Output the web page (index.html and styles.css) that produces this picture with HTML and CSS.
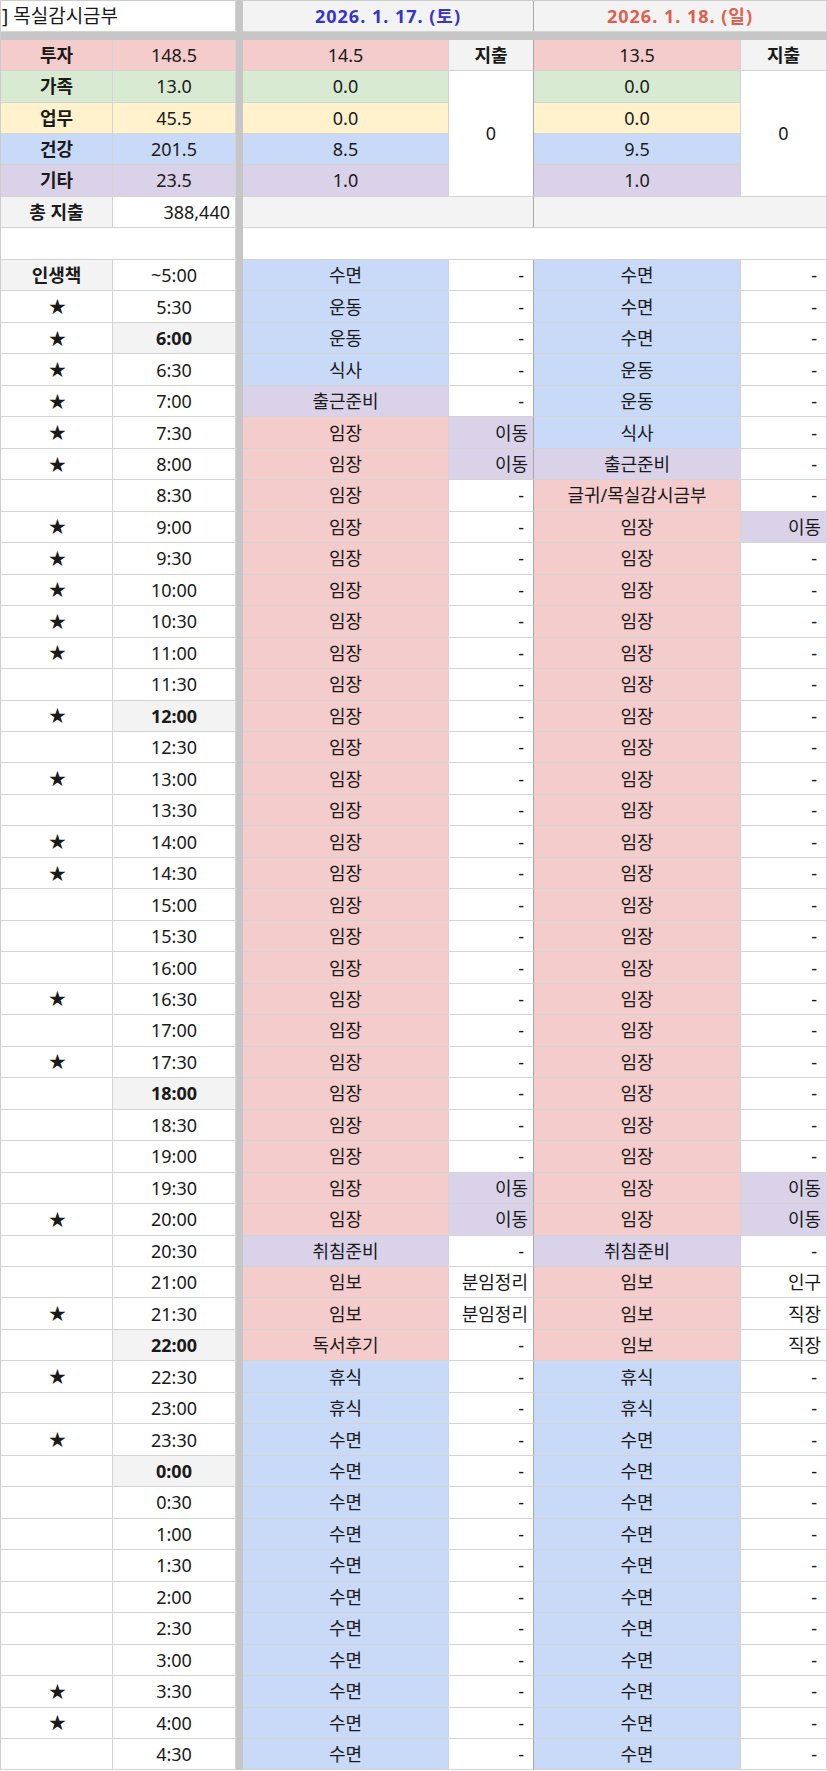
FILE: index.html
```html
<!DOCTYPE html>
<html lang="ko">
<head>
<meta charset="utf-8">
<title>목실감시금부</title>
<link rel="stylesheet" href="styles.css">
</head>
<body>
<div class="sheet">
  <div class="vsep"></div>
  <div class="hsep"></div>

  <div class="title">] 목실감시금부</div>
  <div class="date sat s">2026. 1. 17. (토)</div>
  <div class="date sun">2026. 1. 18. (일)</div>

  <div class="r k">투자</div><div class="r">148.5</div><div class="r">14.5</div><div class="h k s">지출</div><div class="r">13.5</div><div class="h k">지출</div>
  <div class="g k">가족</div><div class="g">13.0</div><div class="g">0.0</div><div class="tall s">0</div><div class="g">0.0</div><div class="tall">0</div>
  <div class="y k">업무</div><div class="y">45.5</div><div class="y">0.0</div><div class="y">0.0</div>
  <div class="b k">건강</div><div class="b">201.5</div><div class="b">8.5</div><div class="b">9.5</div>
  <div class="p k">기타</div><div class="p">23.5</div><div class="p">1.0</div><div class="p">1.0</div>
  <div class="h k">총 지출</div><div class="n">388,440</div><div class="h span2 s"></div><div class="h span2"></div>
  <div class="span2"></div><div class="span4"></div>

  <div class="h k">인생책</div><div>~5:00</div><div class="b">수면</div><div class="n d s">-</div><div class="b">수면</div><div class="n d">-</div>
  <div class="st">★</div><div>5:30</div><div class="b">운동</div><div class="n d s">-</div><div class="b">수면</div><div class="n d">-</div>
  <div class="st">★</div><div class="h k">6:00</div><div class="b">운동</div><div class="n d s">-</div><div class="b">수면</div><div class="n d">-</div>
  <div class="st">★</div><div>6:30</div><div class="b">식사</div><div class="n d s">-</div><div class="b">운동</div><div class="n d">-</div>
  <div class="st">★</div><div>7:00</div><div class="p">출근준비</div><div class="n d s">-</div><div class="b">운동</div><div class="n d">-</div>
  <div class="st">★</div><div>7:30</div><div class="r">임장</div><div class="n p s">이동</div><div class="b">식사</div><div class="n d">-</div>
  <div class="st">★</div><div>8:00</div><div class="r">임장</div><div class="n p s">이동</div><div class="p">출근준비</div><div class="n d">-</div>
  <div class="st"></div><div>8:30</div><div class="r">임장</div><div class="n d s">-</div><div class="r">글귀/목실감시금부</div><div class="n d">-</div>
  <div class="st">★</div><div>9:00</div><div class="r">임장</div><div class="n d s">-</div><div class="r">임장</div><div class="n p">이동</div>
  <div class="st">★</div><div>9:30</div><div class="r">임장</div><div class="n d s">-</div><div class="r">임장</div><div class="n d">-</div>
  <div class="st">★</div><div>10:00</div><div class="r">임장</div><div class="n d s">-</div><div class="r">임장</div><div class="n d">-</div>
  <div class="st">★</div><div>10:30</div><div class="r">임장</div><div class="n d s">-</div><div class="r">임장</div><div class="n d">-</div>
  <div class="st">★</div><div>11:00</div><div class="r">임장</div><div class="n d s">-</div><div class="r">임장</div><div class="n d">-</div>
  <div class="st"></div><div>11:30</div><div class="r">임장</div><div class="n d s">-</div><div class="r">임장</div><div class="n d">-</div>
  <div class="st">★</div><div class="h k">12:00</div><div class="r">임장</div><div class="n d s">-</div><div class="r">임장</div><div class="n d">-</div>
  <div class="st"></div><div>12:30</div><div class="r">임장</div><div class="n d s">-</div><div class="r">임장</div><div class="n d">-</div>
  <div class="st">★</div><div>13:00</div><div class="r">임장</div><div class="n d s">-</div><div class="r">임장</div><div class="n d">-</div>
  <div class="st"></div><div>13:30</div><div class="r">임장</div><div class="n d s">-</div><div class="r">임장</div><div class="n d">-</div>
  <div class="st">★</div><div>14:00</div><div class="r">임장</div><div class="n d s">-</div><div class="r">임장</div><div class="n d">-</div>
  <div class="st">★</div><div>14:30</div><div class="r">임장</div><div class="n d s">-</div><div class="r">임장</div><div class="n d">-</div>
  <div class="st"></div><div>15:00</div><div class="r">임장</div><div class="n d s">-</div><div class="r">임장</div><div class="n d">-</div>
  <div class="st"></div><div>15:30</div><div class="r">임장</div><div class="n d s">-</div><div class="r">임장</div><div class="n d">-</div>
  <div class="st"></div><div>16:00</div><div class="r">임장</div><div class="n d s">-</div><div class="r">임장</div><div class="n d">-</div>
  <div class="st">★</div><div>16:30</div><div class="r">임장</div><div class="n d s">-</div><div class="r">임장</div><div class="n d">-</div>
  <div class="st"></div><div>17:00</div><div class="r">임장</div><div class="n d s">-</div><div class="r">임장</div><div class="n d">-</div>
  <div class="st">★</div><div>17:30</div><div class="r">임장</div><div class="n d s">-</div><div class="r">임장</div><div class="n d">-</div>
  <div class="st"></div><div class="h k">18:00</div><div class="r">임장</div><div class="n d s">-</div><div class="r">임장</div><div class="n d">-</div>
  <div class="st"></div><div>18:30</div><div class="r">임장</div><div class="n d s">-</div><div class="r">임장</div><div class="n d">-</div>
  <div class="st"></div><div>19:00</div><div class="r">임장</div><div class="n d s">-</div><div class="r">임장</div><div class="n d">-</div>
  <div class="st"></div><div>19:30</div><div class="r">임장</div><div class="n p s">이동</div><div class="r">임장</div><div class="n p">이동</div>
  <div class="st">★</div><div>20:00</div><div class="r">임장</div><div class="n p s">이동</div><div class="r">임장</div><div class="n p">이동</div>
  <div class="st"></div><div>20:30</div><div class="p">취침준비</div><div class="n d s">-</div><div class="p">취침준비</div><div class="n d">-</div>
  <div class="st"></div><div>21:00</div><div class="r">임보</div><div class="n s">분임정리</div><div class="r">임보</div><div class="n">인구</div>
  <div class="st">★</div><div>21:30</div><div class="r">임보</div><div class="n s">분임정리</div><div class="r">임보</div><div class="n">직장</div>
  <div class="st"></div><div class="h k">22:00</div><div class="r">독서후기</div><div class="n d s">-</div><div class="r">임보</div><div class="n">직장</div>
  <div class="st">★</div><div>22:30</div><div class="b">휴식</div><div class="n d s">-</div><div class="b">휴식</div><div class="n d">-</div>
  <div class="st"></div><div>23:00</div><div class="b">휴식</div><div class="n d s">-</div><div class="b">휴식</div><div class="n d">-</div>
  <div class="st">★</div><div>23:30</div><div class="b">수면</div><div class="n d s">-</div><div class="b">수면</div><div class="n d">-</div>
  <div class="st"></div><div class="h k">0:00</div><div class="b">수면</div><div class="n d s">-</div><div class="b">수면</div><div class="n d">-</div>
  <div class="st"></div><div>0:30</div><div class="b">수면</div><div class="n d s">-</div><div class="b">수면</div><div class="n d">-</div>
  <div class="st"></div><div>1:00</div><div class="b">수면</div><div class="n d s">-</div><div class="b">수면</div><div class="n d">-</div>
  <div class="st"></div><div>1:30</div><div class="b">수면</div><div class="n d s">-</div><div class="b">수면</div><div class="n d">-</div>
  <div class="st"></div><div>2:00</div><div class="b">수면</div><div class="n d s">-</div><div class="b">수면</div><div class="n d">-</div>
  <div class="st"></div><div>2:30</div><div class="b">수면</div><div class="n d s">-</div><div class="b">수면</div><div class="n d">-</div>
  <div class="st"></div><div>3:00</div><div class="b">수면</div><div class="n d s">-</div><div class="b">수면</div><div class="n d">-</div>
  <div class="st">★</div><div>3:30</div><div class="b">수면</div><div class="n d s">-</div><div class="b">수면</div><div class="n d">-</div>
  <div class="st">★</div><div>4:00</div><div class="b">수면</div><div class="n d s">-</div><div class="b">수면</div><div class="n d">-</div>
  <div class="st"></div><div>4:30</div><div class="b">수면</div><div class="n d s">-</div><div class="b">수면</div><div class="n d">-</div>
</div>
</body>
</html>
```

FILE: styles.css
```css
* { box-sizing: border-box; }
html, body { margin: 0; padding: 0; background: #ffffff; }
body {
  font-family: "Noto Sans", "Noto Sans CJK KR", sans-serif;
  font-size: 18px;
  color: #1a1a1a;
}
.sheet {
  display: grid;
  width: 827px;
  grid-template-columns: 112px 123px 7px 206px 85px 207px 86px;
  grid-template-rows: 31px 8px repeat(6, 31.33px) 32px repeat(48, 31.48px);
  border-left: 1px solid #cdcdcd;
  border-top: 1px solid #cdcdcd;
}
.sheet > div {
  display: flex;
  align-items: center;
  justify-content: center;
  border-right: 1px solid #d4d4d4;
  border-bottom: 1px solid #d4d4d4;
  white-space: nowrap;
  overflow: hidden;
  line-height: 1;
  background: #ffffff;
}
.sheet > .vsep {
  grid-column: 3;
  grid-row: 1 / -1;
  background: #c6c6c6;
  border: 0;
}
.sheet > .hsep {
  grid-column: 1 / -1;
  grid-row: 2;
  background: #c6c6c6;
  border: 0;
}
.sheet > .title {
  grid-column: span 2;
  justify-content: flex-start;
  padding-left: 1px;
  font-size: 19px;
}
.sheet > .date {
  grid-column: span 2;
  background: #f3f3f3;
  font-weight: 700;
  letter-spacing: 1px;
}
.sat { color: #3434cf; }
.sun { color: #df5f4e; }
.span2 { grid-column: span 2; }
.span4 { grid-column: span 4; }
.tall { grid-row: span 4; }
.sheet > .r { background: #f4cccc; }
.sheet > .g { background: #d9ead3; }
.sheet > .y { background: #fff2cc; }
.sheet > .b { background: #c9daf8; }
.sheet > .p { background: #d9d2e9; }
.sheet > .h { background: #f3f3f3; }
.k { font-weight: 700; }
.sheet > .n { justify-content: flex-end; padding-right: 5px; }
.sheet > .d { padding-right: 9px; }
.sheet > .s { border-right-color: #a8a8a8; }
.st { font-family: "DejaVu Sans", sans-serif; font-size: 21px; padding-left: 2px; padding-top: 2px; }
```
